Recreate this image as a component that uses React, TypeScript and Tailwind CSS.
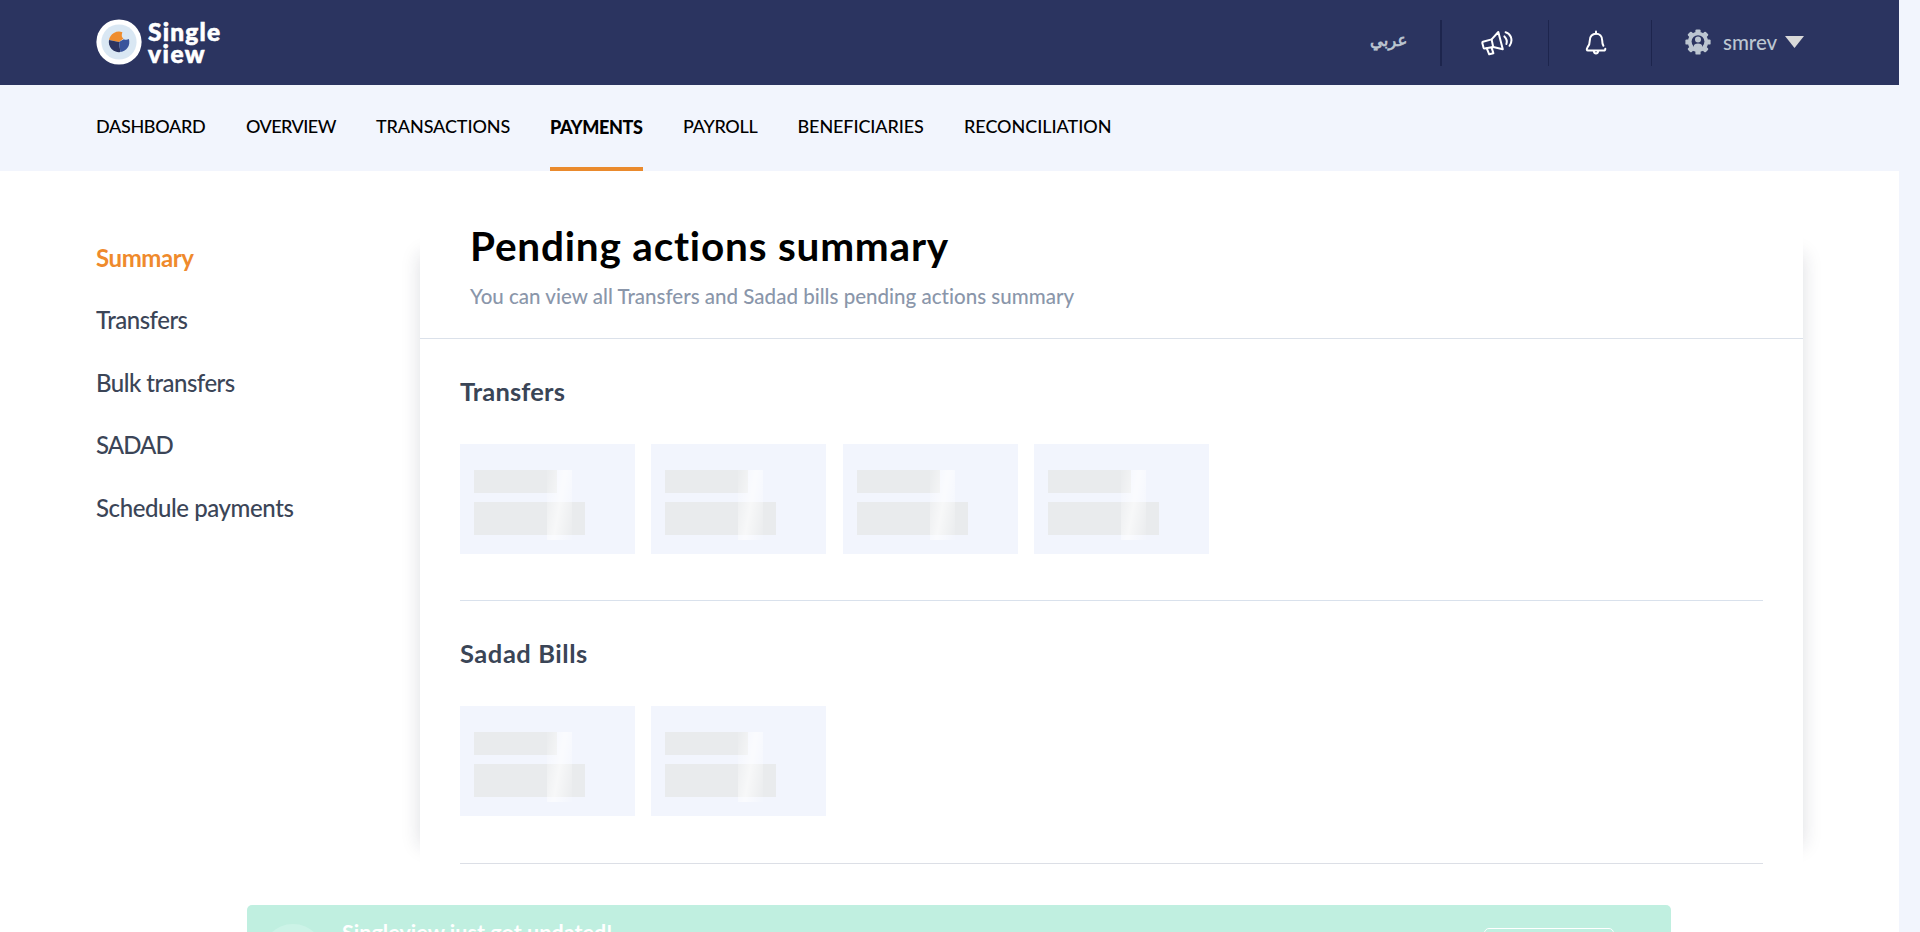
const NAV = [
  { label: "DASHBOARD", cls: "w-[110px] tracking-[-0.33px]" },
  { label: "OVERVIEW", cls: "w-[90px] tracking-[-0.55px]" },
  { label: "TRANSACTIONS", cls: "w-[134px] tracking-[-0.1px]" },
  { label: "PAYMENTS", cls: "w-[93px] tracking-[-0.4px]", active: true },
  { label: "PAYROLL", cls: "w-[74.5px] tracking-[-0.3px]" },
  { label: "BENEFICIARIES", cls: "w-[126.5px] tracking-[-0.1px]" },
  { label: "RECONCILIATION", cls: "w-[148px] tracking-[-0.04px]" },
];

const SIDE = [
  { label: "Summary", cls: "font-bold text-[#ef8a2c] tracking-[-0.42px]" },
  { label: "Transfers", cls: "font-medium text-[#3b4557] tracking-[-0.5px]" },
  { label: "Bulk transfers", cls: "font-medium text-[#3b4557] tracking-[-0.52px]" },
  { label: "SADAD", cls: "font-medium text-[#3b4557] tracking-[-0.95px]" },
  { label: "Schedule payments", cls: "font-medium text-[#3b4557] tracking-[-0.42px]" },
];

function Logo() {
  return (
    <div className="flex items-center gap-[6px]">
      <svg width="46" height="46" viewBox="0 0 46 46">
        <circle cx="23" cy="23" r="22.6" fill="#fff" />
        <circle cx="23" cy="23" r="17.6" fill="#d9e7f3" />
        <path d="M23 23 L13 21 A10.2 10.2 0 0 1 26.4 13.2 Q24.6 17.6 27.5 19.6 Z" fill="#ef8d2e" />
        <path d="M23 23 L13 21 A10.2 10.2 0 0 0 24.4 33.1 Z" fill="#2b3460" />
        <path d="M23 23 L27.8 20.2 Q30.4 21.4 32.9 20 A10.2 10.2 0 0 1 24.4 33.1 Z" fill="#38539b" />
      </svg>
      <div className="flex flex-col pt-px text-[24.5px] leading-[21.5px] font-black text-white [-webkit-text-stroke:0.6px_white]">
        <span className="tracking-[1.2px]">Single</span>
        <span className="tracking-[1.5px]">view</span>
      </div>
    </div>
  );
}

function MegaphoneIcon() {
  return (
    <svg width="32" height="26" viewBox="0 0 32 26" fill="none" stroke="#fff" strokeWidth="2" strokeLinecap="round" strokeLinejoin="round">
      <path d="M2 11.7 L10.6 9.4 L17.3 2 L21.8 19.3 L12.2 17 L3.6 18.6 Q2.8 18.6 2.5 17.6 L1.3 13 Q1.2 12 2 11.7 Z" />
      <path d="M10.6 9.4 L12.2 17" />
      <path d="M5.8 18.4 L8.2 24.3 L12.4 23.2 L10.6 17.6" />
      <path d="M23.4 6.4 Q26.8 9.6 25.4 14" />
      <path d="M24.6 2.2 Q28 3 29.8 6.8 Q31.6 11.4 28.6 15.8" />
    </svg>
  );
}

function BellIcon() {
  return (
    <svg width="22" height="25" viewBox="0 0 22 25" fill="none" stroke="#fff" strokeWidth="2" strokeLinecap="round" strokeLinejoin="round">
      <path d="M11 1.5 V3.6" />
      <path d="M18.4 15.8 Q17.2 13.6 17.2 10.4 C17.2 6.4 14.6 3.7 11 3.7 C7.4 3.7 4.8 6.4 4.8 10.4 Q4.8 14.4 2.6 17.2 Q1.6 18.8 1.8 19.8 Q2 20.6 3 20.6 H19 Q20.3 20.6 20.3 18.8" />
      <path d="M8.8 21 Q9.2 23.4 11 23.4 Q12.8 23.4 13.2 21" />
    </svg>
  );
}

function GearUserIcon() {
  return (
    <svg width="26" height="26" viewBox="0 0 26 26">
      <g fill="#bcc6d1">
        <circle cx="13" cy="13" r="10.2" />
        <rect x="10.4" y="0.4" width="5.2" height="25.2" rx="1.2" />
        <rect x="10.4" y="0.4" width="5.2" height="25.2" rx="1.2" transform="rotate(45 13 13)" />
        <rect x="10.4" y="0.4" width="5.2" height="25.2" rx="1.2" transform="rotate(90 13 13)" />
        <rect x="10.4" y="0.4" width="5.2" height="25.2" rx="1.2" transform="rotate(135 13 13)" />
      </g>
      <circle cx="13" cy="12.6" r="6.4" fill="#2b3460" />
      <circle cx="13" cy="10.6" r="3" fill="#bcc6d1" />
      <path d="M8.8 20 V17 Q9 14.6 13 14.4 Q17 14.6 17.2 17 V20 Z" fill="#bcc6d1" />
    </svg>
  );
}

function SkeletonCard() {
  return (
    <div className="h-[110px] w-[175px] bg-[#f2f5fd] pl-[14px] pt-[26px]">
      <div className="relative flex h-[70px] w-[111px] flex-col gap-[9px]">
        <div className="h-[23px] w-[83px] bg-[#e9ebed]" />
        <div className="h-[33px] w-[111px] bg-[#e9ebed]" />
        <div className="absolute left-[73px] top-0 h-[70px] w-[25px] bg-[linear-gradient(100deg,rgba(255,255,255,0.1)_5%,rgba(255,255,255,0.65)_50%,rgba(255,255,255,0.1)_95%)]" />
      </div>
    </div>
  );
}

function Section({ title, count, cls, titleCls }: { title: string; count: number; cls: string; titleCls: string }) {
  return (
    <section className={`mx-10 border-b pt-[33.5px] ${cls}`}>
      <h2 className={`text-[25.5px] leading-[36px] font-bold text-[#3a4556] ${titleCls}`}>{title}</h2>
      <div className="mt-[35.5px] flex gap-[16.3px]">
        {Array.from({ length: count }, (_, i) => (
          <SkeletonCard key={i} />
        ))}
      </div>
    </section>
  );
}

export default function App() {
  return (
    <div className="h-[932px] w-full overflow-hidden bg-[#f2f5fd] font-[Lato,sans-serif]">
      <div className="h-full w-[1899px] bg-white">
        <header className="flex h-[85px] justify-between bg-[#2b3460] pl-[96px]">
          <div className="flex h-[84px] items-center">
            <Logo />
          </div>
          <div className="flex h-[85px] items-center text-[#bcc6d1]">
            <span
              className="mr-[34px] mb-[3px] w-[36px] text-center font-['DejaVu_Sans',sans-serif] text-[16.5px] leading-[30px] [-webkit-text-stroke:0.7px_#bcc6d1]"
              lang="ar"
            >
              عربي
            </span>
            <span className="h-[46px] w-[2px] bg-[#1d254d]" />
            <span className="ml-[39px] mr-[35px] w-[32px]">
              <MegaphoneIcon />
            </span>
            <span className="h-[46px] w-px bg-[#1d254d]" />
            <span className="ml-[36px] mr-[44px] w-[22px]">
              <BellIcon />
            </span>
            <span className="h-[46px] w-px bg-[#1d254d]" />
            <span className="ml-[33px] mb-px w-[26px]">
              <GearUserIcon />
            </span>
            <span className="ml-[12px] mb-px w-[54px] text-[20.5px] leading-[30px] font-medium">smrev</span>
            <svg className="mr-[95px] mb-[2px] ml-[8px]" width="19" height="12" viewBox="0 0 19 12">
              <path d="M0 0 H19 L9.5 12 Z" fill="#d9d9d9" />
            </svg>
          </div>
        </header>

        <nav className="flex h-[86px] gap-10 bg-[#f2f5fd] pl-[96px] text-[18px] leading-[82px] text-black">
          {NAV.map((n) => (
            <a
              key={n.label}
              className={`box-border block h-[86px] border-b-4 whitespace-nowrap ${n.cls} ${
                n.active ? "border-[#ea8a2d] pt-px font-black" : "border-transparent font-medium"
              }`}
            >
              {n.label}
            </a>
          ))}
        </nav>

        <div className="flex pl-[96px]">
          <aside className="w-[324px] pt-[55.5px]">
            {SIDE.map((s) => (
              <div key={s.label} className={`text-[24px] leading-[62.5px] whitespace-nowrap ${s.cls}`}>
                {s.label}
              </div>
            ))}
          </aside>

          <main className="mt-[39px] h-[680px] w-[1383px] bg-white shadow-[-44px_0_18px_-44px_rgba(30,35,60,0.15),44px_0_18px_-44px_rgba(30,35,60,0.15)]">
            <div className="h-[129px] border-b border-[#dbe1ea] pt-[12px] pl-[50px]">
              <h1 className="text-[40.5px] leading-[48px] font-bold tracking-[0.8px] text-black">Pending actions summary</h1>
              <p className="mt-[11px] text-[20.5px] leading-[30px] font-medium tracking-[0.02px] text-[#8a96aa]">
                You can view all Transfers and Sadad bills pending actions summary
              </p>
            </div>
            <Section title="Transfers" count={4} cls="h-[262px] border-[#d9e1ec]" titleCls="tracking-[0.15px]" />
            <Section title="Sadad Bills" count={2} cls="h-[263px] border-[#dcdfe6]" titleCls="tracking-[0.55px]" />
          </main>
        </div>
      </div>

      <div className="fixed left-[247px] top-[905px] flex h-[90px] w-[1424px] rounded-[5px] bg-[#c0efe0]">
        <span className="ml-[14px] mt-[19px] size-[64px] rounded-full bg-[#ccf3e7]" />
        <span className="ml-[17px] mt-[13px] w-[300px] text-[21.5px] leading-[28px] font-bold tracking-[0.04px] whitespace-nowrap text-white">
          Singleview just got updated!
        </span>
        <span className="mt-[23px] mr-[57px] ml-auto h-[44px] w-[130px] rounded-[5px] border border-white" />
      </div>
    </div>
  );
}
